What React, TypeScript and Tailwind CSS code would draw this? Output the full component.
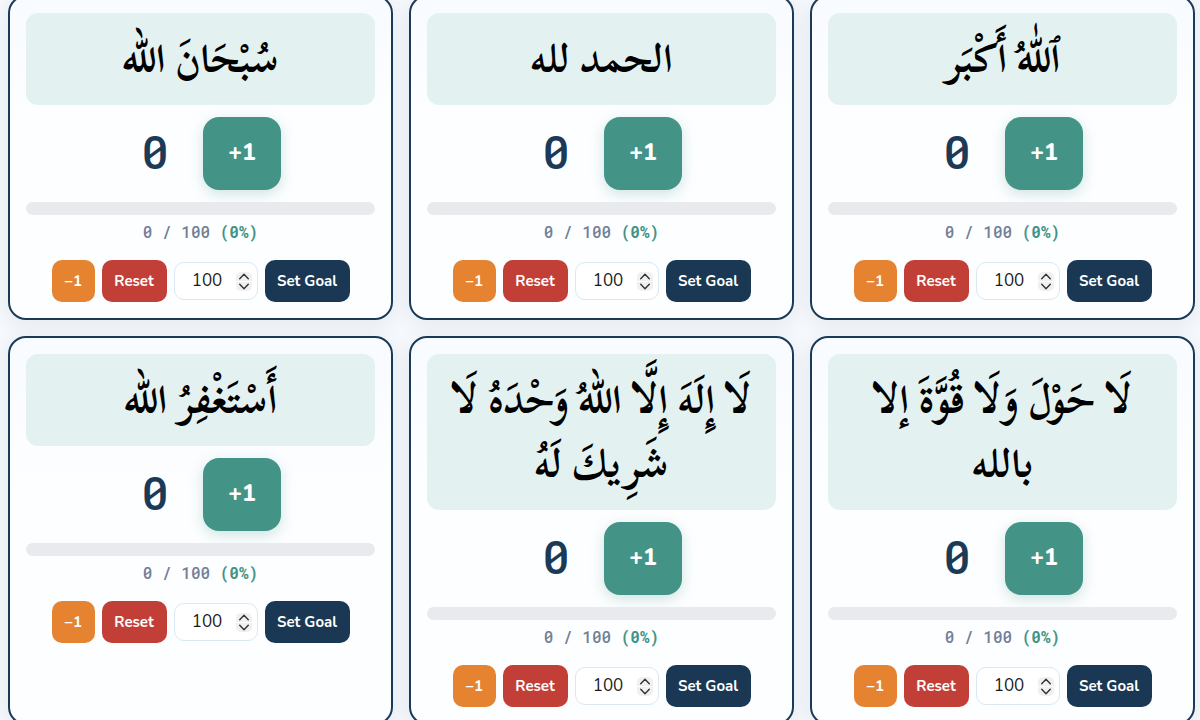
import React, { useState } from 'react';
import { ChevronDown, ChevronUp } from 'lucide-react';

interface Dhikr {
  id: string;
  text: string;
}

const DHIKRS: Dhikr[] = [
  { id: 'subhanallah', text: 'سُبْحَانَ الله' },
  { id: 'alhamdulillah', text: 'الحمد لله' },
  { id: 'allahu-akbar', text: 'ٱللّٰهُ أَكْبَر' },
  { id: 'astaghfirullah', text: 'أَسْتَغْفِرُ الله' },
  { id: 'tahlil', text: 'لَا إِلَهَ إِلَّا اللهُ وَحْدَهُ لَا شَرِيكَ لَهُ' },
  { id: 'hawqala', text: 'لَا حَوْلَ وَلَا قُوَّةَ إلا بالله' },
];

function DhikrCard({ dhikr }: { dhikr: Dhikr }) {
  const [count, setCount] = useState(0);
  const [goal, setGoal] = useState(100);
  const [draft, setDraft] = useState(100);
  const percent = Math.min(100, Math.round((count / goal) * 100));

  return (
    <section className="flex flex-col items-center rounded-[18px] border-2 border-[#1b3a57] bg-linear-to-b from-[#f8fbff] to-[#fdfeff] to-40% p-4 shadow-[0_4px_20px_rgba(27,58,87,0.08)]">
      <h2
        lang="ar"
        dir="rtl"
        className="w-full rounded-xl bg-[#e3f1f0] px-4 py-[14px] text-center font-['Scheherazade_New','Amiri','DejaVu_Sans',serif] text-[40px] leading-[64px] font-bold text-black"
      >
        {dhikr.text}
      </h2>

      <div className="mt-3 flex items-center gap-[13px]">
        <output className="w-[70px] pb-1.5 text-center font-['Roboto_Mono','Noto_Sans',monospace] text-[46px] leading-[56px] font-medium text-[#1b3a57]">
          {count}
        </output>
        <button
          onClick={() => setCount(count + 1)}
          className="h-[73px] w-[78px] rounded-2xl bg-[#439487] text-[23px] font-extrabold text-white shadow-[0_4px_14px_rgba(67,148,135,0.25)]"
        >
          +1
        </button>
      </div>

      <div className="mt-3 h-[13px] w-full overflow-hidden rounded-full bg-[#e9eaed]">
        <div className="h-full bg-[#439487]" style={{ width: `${percent}%` }} />
      </div>
      <p className="mt-[5px] font-['Roboto_Mono','DejaVu_Sans_Mono',monospace] text-[16px] leading-6 font-medium text-[#718096]">
        {count} / {goal} <span className="font-bold text-[#439487]">({percent}%)</span>
      </p>

      <div className="mt-4 flex items-center gap-[7px] text-[15px] font-bold text-white">
        <button
          onClick={() => setCount(Math.max(0, count - 1))}
          className="h-[42px] w-[43px] rounded-[10px] bg-[#e58331]"
        >
          −1
        </button>
        <button onClick={() => setCount(0)} className="h-[42px] w-[65px] rounded-[10px] bg-[#c23f38]">
          Reset
        </button>
        <div className="flex h-[38px] w-[84px] items-center rounded-[10px] border border-[#d9e8f1] bg-white pr-[5px]">
          <input
            type="number"
            aria-label="Goal"
            value={draft}
            onChange={(e) => setDraft(Number(e.target.value))}
            className="w-full min-w-0 appearance-none bg-transparent pl-1 text-center text-[17px] font-normal text-[#1a1a1a] outline-none [&::-webkit-inner-spin-button]:appearance-none"
          />
          <div className="flex shrink-0 flex-col gap-px overflow-hidden rounded-[5px] text-[#333333]">
            <button aria-label="Increase goal" onClick={() => setDraft(draft + 1)} className="bg-[#f0f0f0] px-[3px]">
              <ChevronUp viewBox="5 7 14 10" className="h-[9px] w-[10px]" strokeWidth={2} />
            </button>
            <button aria-label="Decrease goal" onClick={() => setDraft(Math.max(1, draft - 1))} className="bg-[#f0f0f0] px-[3px]">
              <ChevronDown viewBox="5 7 14 10" className="h-[9px] w-[10px]" strokeWidth={2} />
            </button>
          </div>
        </div>
        <button onClick={() => setGoal(Math.max(1, draft))} className="h-[42px] w-[85px] rounded-[10px] bg-[#1a3853]">
          Set Goal
        </button>
      </div>
    </section>
  );
}

export default function App() {
  return (
    <main className="h-screen overflow-hidden bg-[#f5f8fc] font-['Nunito','Noto_Sans',sans-serif]">
      <div className="-mt-[5px] grid grid-cols-3 gap-4 pr-[5px] pl-2">
        {DHIKRS.map((dhikr) => (
          <DhikrCard key={dhikr.id} dhikr={dhikr} />
        ))}
      </div>
    </main>
  );
}
